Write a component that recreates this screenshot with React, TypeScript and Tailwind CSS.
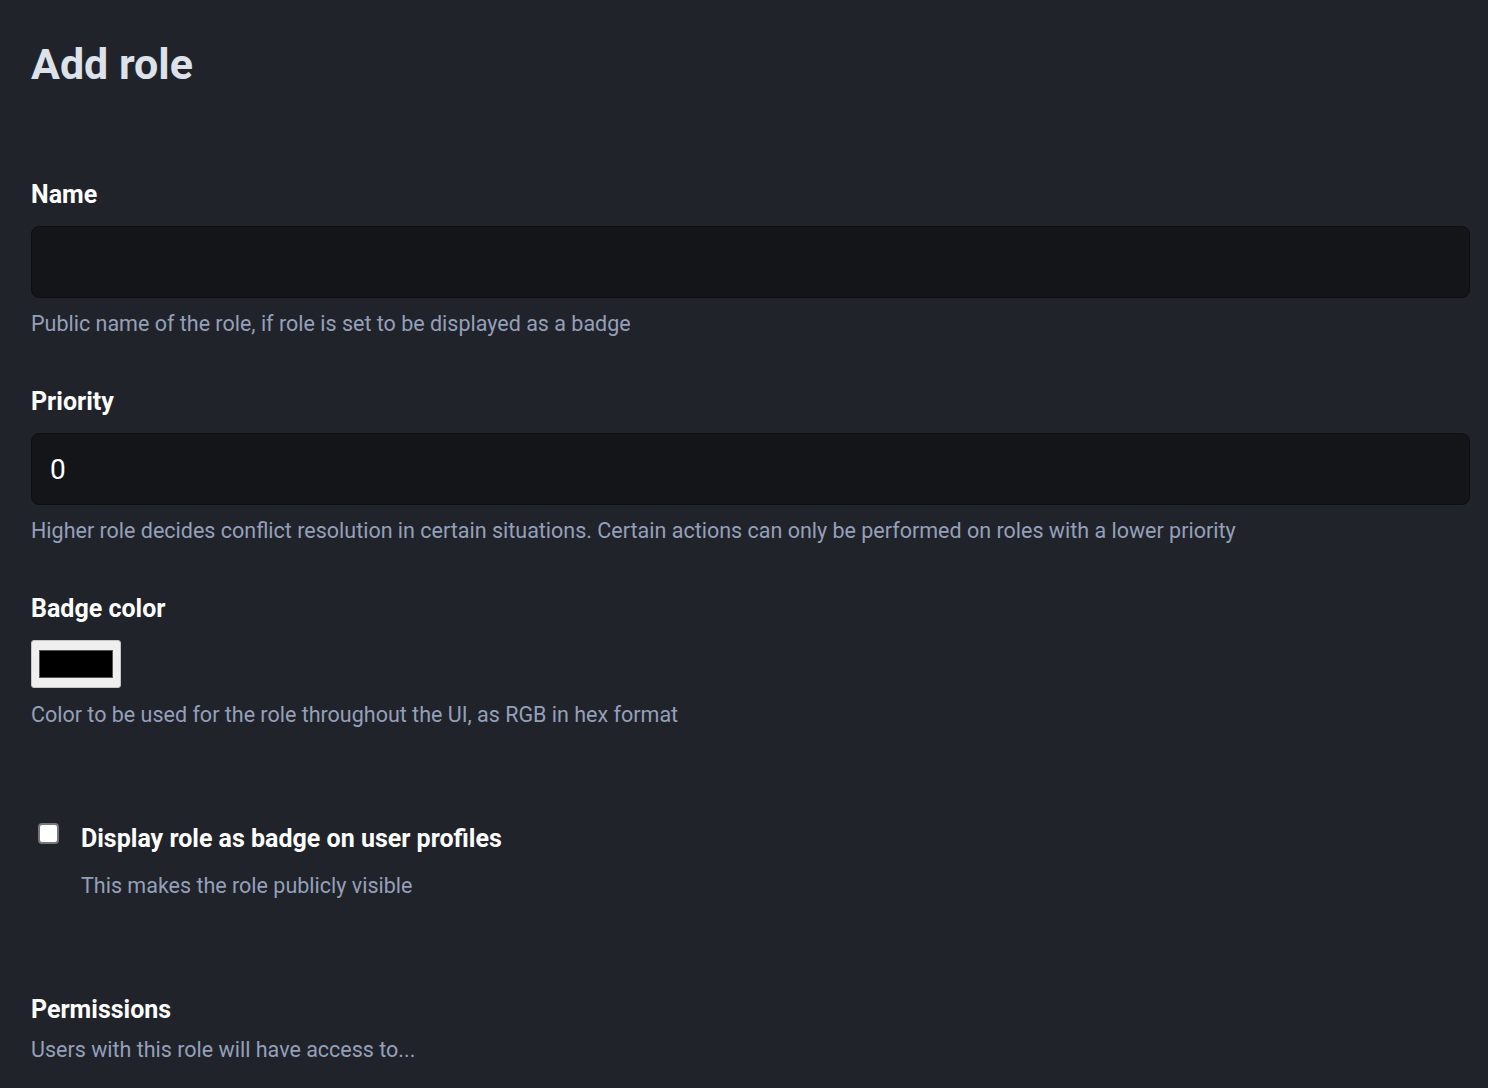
import React from 'react';

const font = { fontFamily: 'Roboto, "Liberation Sans", sans-serif' };

const Hint: React.FC<{ className?: string; children: React.ReactNode }> = ({ className = 'mt-[13px]', children }) => (
  <p className={`${className} text-[21.5px] leading-[26px] text-[#94a0b9]`}>{children}</p>
);

const Label: React.FC<{ children: React.ReactNode }> = ({ children }) => (
  <label className="block text-[25px] font-bold leading-[30px] text-white">{children}</label>
);

const inputCls =
  'mt-[16px] block h-[72px] w-full rounded-lg border border-[#0e0f12] bg-[#141519] px-[18px] text-[28px] text-white outline-none';

const App: React.FC = () => {
  return (
    <div className="min-h-[1088px] bg-[#21232b] pl-[31px] pr-[18px] pt-[36px]" style={font}>
      {/* Header */}
      <h1 className="text-[43px] font-bold leading-[56px] text-[#dde2ea]">Add role</h1>

      {/* Name */}
      <div className="mt-[88px]">
        <Label>Name</Label>
        <input type="text" className={inputCls} />
        <Hint>Public name of the role, if role is set to be displayed as a badge</Hint>
      </div>

      {/* Priority */}
      <div className="mt-[50px]">
        <Label>Priority</Label>
        <input type="text" defaultValue="0" className={inputCls} />
        <Hint>Higher role decides conflict resolution in certain situations. Certain actions can only be performed on roles with a lower priority</Hint>
      </div>

      {/* Badge color */}
      <div className="mt-[50px]">
        <Label>Badge color</Label>
        <div className="mt-[16px] flex h-[48px] w-[90px] items-center justify-center rounded-[3px] border border-[#c4c4c4] bg-[#efefef]">
          <div className="h-[28px] w-[74px] border border-[#555] bg-black" />
        </div>
        <Hint className="mt-[14px]">Color to be used for the role throughout the UI, as RGB in hex format</Hint>
      </div>

      {/* Display as badge */}
      <div className="mt-[96px] flex items-start">
        <span className="ml-[7px] -mt-[1px] block h-[21px] w-[21px] rounded-[4px] border-2 border-[#777] bg-white" />
        <div className="ml-[22px]">
          <div className="text-[25px] font-bold leading-[30px] text-white">Display role as badge on user profiles</div>
          <Hint className="mt-[19px]">This makes the role publicly visible</Hint>
        </div>
      </div>

      {/* Permissions */}
      <div className="mt-[96px]">
        <Label>Permissions</Label>
        <Hint className="mt-[12px]">Users with this role will have access to...</Hint>
      </div>
    </div>
  );
};

export default App;
